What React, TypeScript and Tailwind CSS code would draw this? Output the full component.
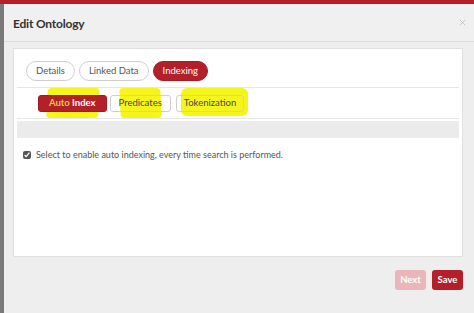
import { X } from "lucide-react";

function App() {
  const tabs = ["Details", "Linked Data", "Indexing"];
  return (
    <div className="w-[474px] h-[313px] flex flex-col bg-[#eeeeee] overflow-hidden font-['Lato',sans-serif]">
      <div className="h-[4px] bg-[#b3202a]" />
      <div className="flex flex-1">
        <div className="w-[4px] bg-[#7a7a7a]" />
        <div className="flex-1 flex flex-col">
          {/* header */}
          <div className="h-[38px] flex items-center justify-between pl-[9px] pr-[7px] border-b border-[#dcdcdc] bg-[#f0f0f0]">
            <h1 className="text-[12px] font-bold tracking-[-0.2px] text-[#333] mt-[2px]">Edit Ontology</h1>
            <X size={9} strokeWidth={2} className="text-[#b5b5b5]" />
          </div>

          {/* body */}
          <div className="pl-[9px] pr-[11px] pt-[6px]">
            <div className="h-[209px] bg-white border border-[#e0e0e0] px-[3px]">
              <div className="flex gap-[4px] pl-[9px] pt-[12px] pb-[6px] border-b border-[#e6e6e6]">
                {tabs.map((tab) => (
                  <div
                    key={tab}
                    className={
                      tab === "Indexing"
                        ? "h-[20px] px-[9px] flex items-center rounded-full bg-[#b3202a] border border-[#a51c25] text-white text-[9.5px]"
                        : "h-[20px] px-[9px] flex items-center rounded-full bg-white border border-[#cfcfcf] text-[#555] text-[9.5px]"
                    }
                  >
                    {tab}
                  </div>
                ))}
              </div>

              <div className="relative flex gap-[3px] pl-[21px] pt-[7px] pb-[6px] border-b border-[#e6e6e6]">
                <div className="absolute left-[30px] top-[0px] w-[52px] h-[30px] bg-[#f5f51c] rounded-[4px] -skew-x-3" />
                <div className="absolute left-[103px] top-[0px] w-[41px] h-[30px] bg-[#f5f51c] rounded-[4px] skew-x-3" />
                <div className="absolute left-[164px] top-[0px] w-[67px] h-[28px] bg-[#f5f51c] rounded-[6px]" />
                <div className="relative h-[17px] px-[10px] flex items-center rounded-[3px] bg-[#b3202a] border border-[#9e1b23] text-white text-[9.5px] font-bold">
                  <span className="text-[#f2c93a]">Auto</span>&nbsp;Index
                </div>
                <div className="relative h-[17px] px-[8px] flex items-center rounded-[3px] border border-[#cfcfcf] text-[#444] text-[9.5px]">
                  Predicates
                </div>
                <div className="relative h-[17px] px-[7px] ml-[2px] flex items-center rounded-[3px] border border-[#cfcfcf] text-[#444] text-[9.5px]">
                  Tokenization
                </div>
              </div>

              <div className="h-[17px] mt-[2px] bg-[#ebebeb]" />

              <div className="flex items-center gap-[5px] pl-[6px] pt-[10px]">
                <input type="checkbox" defaultChecked className="w-[8px] h-[8px] accent-[#555]" />
                <span className="text-[9px] text-[#555]">
                  Select to enable auto indexing, every time search is performed.
                </span>
              </div>
            </div>
          </div>

          {/* footer */}
          <div className="flex justify-end gap-[6px] pr-[11px] pt-[13px]">
            <button className="h-[20px] w-[31px] rounded-[3px] bg-[#eab6b9] text-white text-[9.5px] font-bold">
              Next
            </button>
            <button className="h-[20px] w-[31px] rounded-[3px] bg-[#b3202a] text-white text-[9.5px] font-bold">
              Save
            </button>
          </div>
        </div>
      </div>
    </div>
  );
}

export default App;
